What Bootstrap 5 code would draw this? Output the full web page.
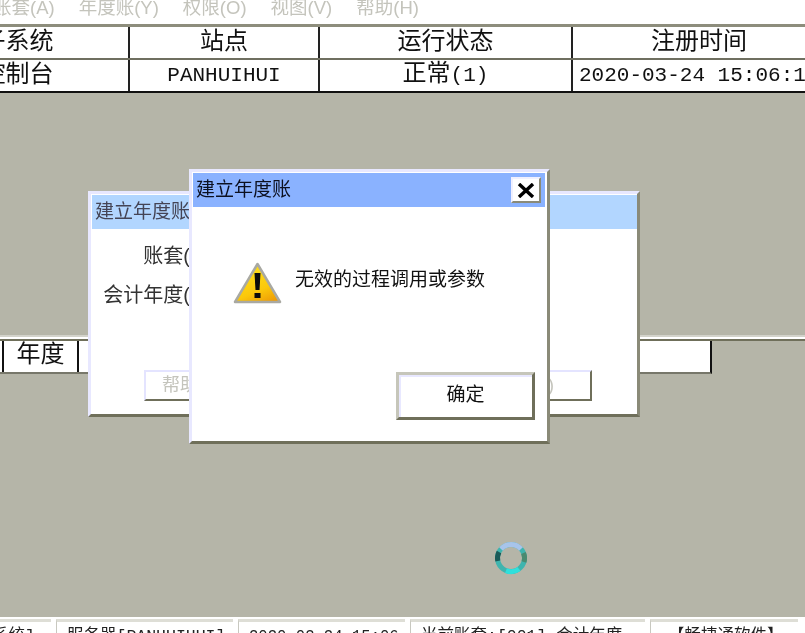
<!DOCTYPE html>
<html lang="zh-CN">
<head>
<meta charset="UTF-8">
<title>系统管理</title>
<link href="https://cdn.jsdelivr.net/npm/bootstrap@5.3.0/dist/css/bootstrap.min.css" rel="stylesheet">
<style>
    html, body { height: 633px; overflow: hidden; }
    body { font-family: "Liberation Mono", "Noto Sans CJK SC", monospace; background: #fff; color: #111; }
    .soft { filter: blur(.5px); }

    .menu-strip { height: 24px; gap: 24px; margin-left: -7px; overflow: hidden; color: #c4c4bc; font-size: 18.5px; line-height: 15px; font-family: "Liberation Sans", "Noto Sans CJK SC", sans-serif; }

    .grid-top { height: 69px; overflow: hidden; border-top: 3px solid #8d8d7c; flex: none; }
    .sheet { table-layout: fixed; margin-left: -93px; width: 1010px; border-collapse: collapse; background: #fff; }
    .sheet td { text-align: center; padding: 0; height: 32px; line-height: 30px; font-size: 24px; border-right: 2px solid #222; white-space: nowrap; overflow: hidden; }
    .sheet tr:first-child td { border-bottom: 2px solid #6f6f60; }
    .sheet tr:last-child td { height: 33px; border-bottom: 3px solid #111; }
    .sheet .time-head { display: block; width: 252px; text-align: center; }
    .sheet .latin { font-size: 21px; }
    .sheet .time-cell { text-align: left; padding-left: 6px; }

    .desk { background: #b5b5a8; position: relative; padding-top: 242px; min-height: 0; }
    .grid-second { border-top: 2px solid #d2d2ca; }
    .grid-second-band { height: 4px; background: #fff; border-bottom: 2px solid #6f6f5a; }
    .grid-second-row { width: 712px; height: 33px; background: #fff; border-bottom: 2px solid #77776a; border-right: 2px solid #111; font-size: 24px; line-height: 30px; }
    .grid-second-row span { width: 77px; margin-left: 2px; border-left: 2px solid #111; border-right: 2px solid #111; }

    .win { position: absolute; background: #fff; border: 3px solid; border-color: #e8e8ff #8a8a78 #6f6f5a #e8e8ff; font-family: "Liberation Sans", "Noto Sans CJK SC", sans-serif; }
    .win-back { left: 88px; top: 98px; width: 552px; height: 226px; }
    .win-front { left: 189px; top: 76px; width: 361px; height: 275px; }
    .win-title { height: 34px; line-height: 34px; margin: 1px 0 0 1px; padding-left: 3px; font-size: 19px; }
    .win-back .win-title { background: #b2d6ff; color: #445; }
    .win-front .win-title { background: #8ab2ff; color: #0c1020; margin-right: 2px; }
    .close-box { position: absolute; right: 6px; top: 5px; width: 30px; height: 26px; background: #fff; border: 2px solid; border-color: #f0f0ff #8a8a78 #8a8a78 #f0f0ff; }
    .back-label { position: absolute; right: 447px; font-size: 20px; line-height: 24px; color: #333; white-space: nowrap; }
    .back-btn { position: absolute; top: 176px; height: 31px; border: 2px solid; border-color: #e4e4ff #6f6f5a #6f6f5a #e4e4ff; color: #c4c4bc; font-size: 18px; line-height: 26px; white-space: nowrap; }
    .msg-icon { position: absolute; left: 41px; top: 90px; }
    .msg-text { position: absolute; left: 103px; top: 95px; font-size: 19px; line-height: 26px; white-space: nowrap; }
    .ok-btn { position: absolute; left: 204px; top: 200px; width: 139px; height: 48px; background: #fff; border: 3px solid; border-color: #c6c6ba #6f6f5a #6f6f5a #c6c6ba; font-size: 19px; line-height: 40px; text-align: center; box-shadow: inset 2px 2px 0 #e8e8ff; }
    .spin-ring { position: absolute; left: 494px; top: 448px; }

    .status-strip { height: 16px; flex: none; background: #fff; overflow: hidden; gap: 5px; padding-top: 2px; font-size: 16.5px; color: #222; }
    .status-cell { border-top: 3px solid #deded6; border-left: 1px solid #c8c8c0; line-height: 20px; white-space: nowrap; overflow: hidden; padding-left: 10px; padding-top: 5px; height: 40px; flex: none; }
    .status-cell-first { border-left: 0; padding-left: 0; text-indent: -18px; }
    .status-time { font-size: 15.6px; }
</style>
</head>
<body class="d-flex flex-column">

<div class="menu-strip d-flex flex-shrink-0 soft">
    <span>账套(A)</span>
    <span>年度账(Y)</span>
    <span>权限(O)</span>
    <span>视图(V)</span>
    <span>帮助(H)</span>
</div>

<div class="grid-top">
    <table class="sheet soft">
        <colgroup><col style="width:222px"><col style="width:190px"><col style="width:253px"><col style="width:345px"></colgroup>
        <tr><td>子系统</td><td>站点</td><td>运行状态</td><td><span class="time-head">注册时间</span></td></tr>
        <tr><td>控制台</td><td class="latin">PANHUIHUI</td><td>正常<span class="latin">(1)</span></td><td class="latin time-cell">2020-03-24 15:06:18</td></tr>
    </table>
</div>

<div class="desk flex-grow-1">
    <div class="grid-second">
        <div class="grid-second-band"></div>
        <div class="grid-second-row d-flex soft"><span class="text-center">年度</span></div>
    </div>

    <div class="win win-back">
        <div class="win-title soft">建立年度账</div>
        <div class="back-label soft" style="top:50px">账套(</div>
        <div class="back-label soft" style="top:89px">会计年度(</div>
        <div class="back-btn soft ps-3" style="left:53px;width:130px">帮助(H)</div>
        <div class="back-btn soft" style="left:371px;width:130px;padding-left:30px">确定(E)</div>
    </div>

    <div class="win win-front">
        <div class="win-title soft">建立年度账</div>
        <div class="close-box d-flex align-items-center justify-content-center soft">
            <svg width="18" height="15" viewBox="0 0 18 15"><path d="M2 1 L16 14 M16 1 L2 14" stroke="#000" stroke-width="3.4" fill="none"/></svg>
        </div>
        <svg class="msg-icon soft" width="50" height="44" viewBox="0 0 50 44">
            <defs><linearGradient id="warnFill" x1=".3" y1="0" x2=".8" y2="1"><stop offset="0" stop-color="#ffe21e"/><stop offset=".65" stop-color="#fbc80a"/><stop offset="1" stop-color="#ee9c06"/></linearGradient></defs>
            <path d="M24.5 2 L47 40 H2 Z" fill="url(#warnFill)" stroke="#a9a9a2" stroke-width="2.5" stroke-linejoin="round"/>
            <path d="M21.5 11 H27.5 L26.5 28 H22.5 Z" fill="#0c0c0c"/>
            <rect x="21.5" y="31" width="6" height="5" fill="#0c0c0c"/>
        </svg>
        <div class="msg-text soft">无效的过程调用或参数</div>
        <div class="ok-btn soft">确定</div>
    </div>

    <svg class="spin-ring soft" width="34" height="34" viewBox="0 0 34 34" fill="none" stroke-width="5">
        <circle cx="17" cy="17" r="13.5" stroke="#3fb4ae"/>
        <path d="M7 8 A13.5 13.5 0 0 1 27 8" stroke="#a8c4ea"/>
        <path d="M3.8 20 A13.5 13.5 0 0 1 5 11" stroke="#1a5a58"/>
        <path d="M12 29.6 A13.5 13.5 0 0 0 25 28" stroke="#2fe0dc"/>
        <path d="M29.5 12 A13.5 13.5 0 0 1 30 21" stroke="#4a8a70"/>
    </svg>
</div>

<div class="status-strip d-flex soft">
    <div class="status-cell status-cell-first" style="width:51px">[系统]</div>
    <div class="status-cell" style="width:177px">服务器[PANHUIHUI]</div>
    <div class="status-cell status-time" style="width:167px">2020-03-24 15:06</div>
    <div class="status-cell" style="width:235px">当前账套:[001] 会计年度</div>
    <div class="status-cell" style="width:148px;padding-left:17px">【畅捷通软件】</div>
</div>

</body>
</html>
